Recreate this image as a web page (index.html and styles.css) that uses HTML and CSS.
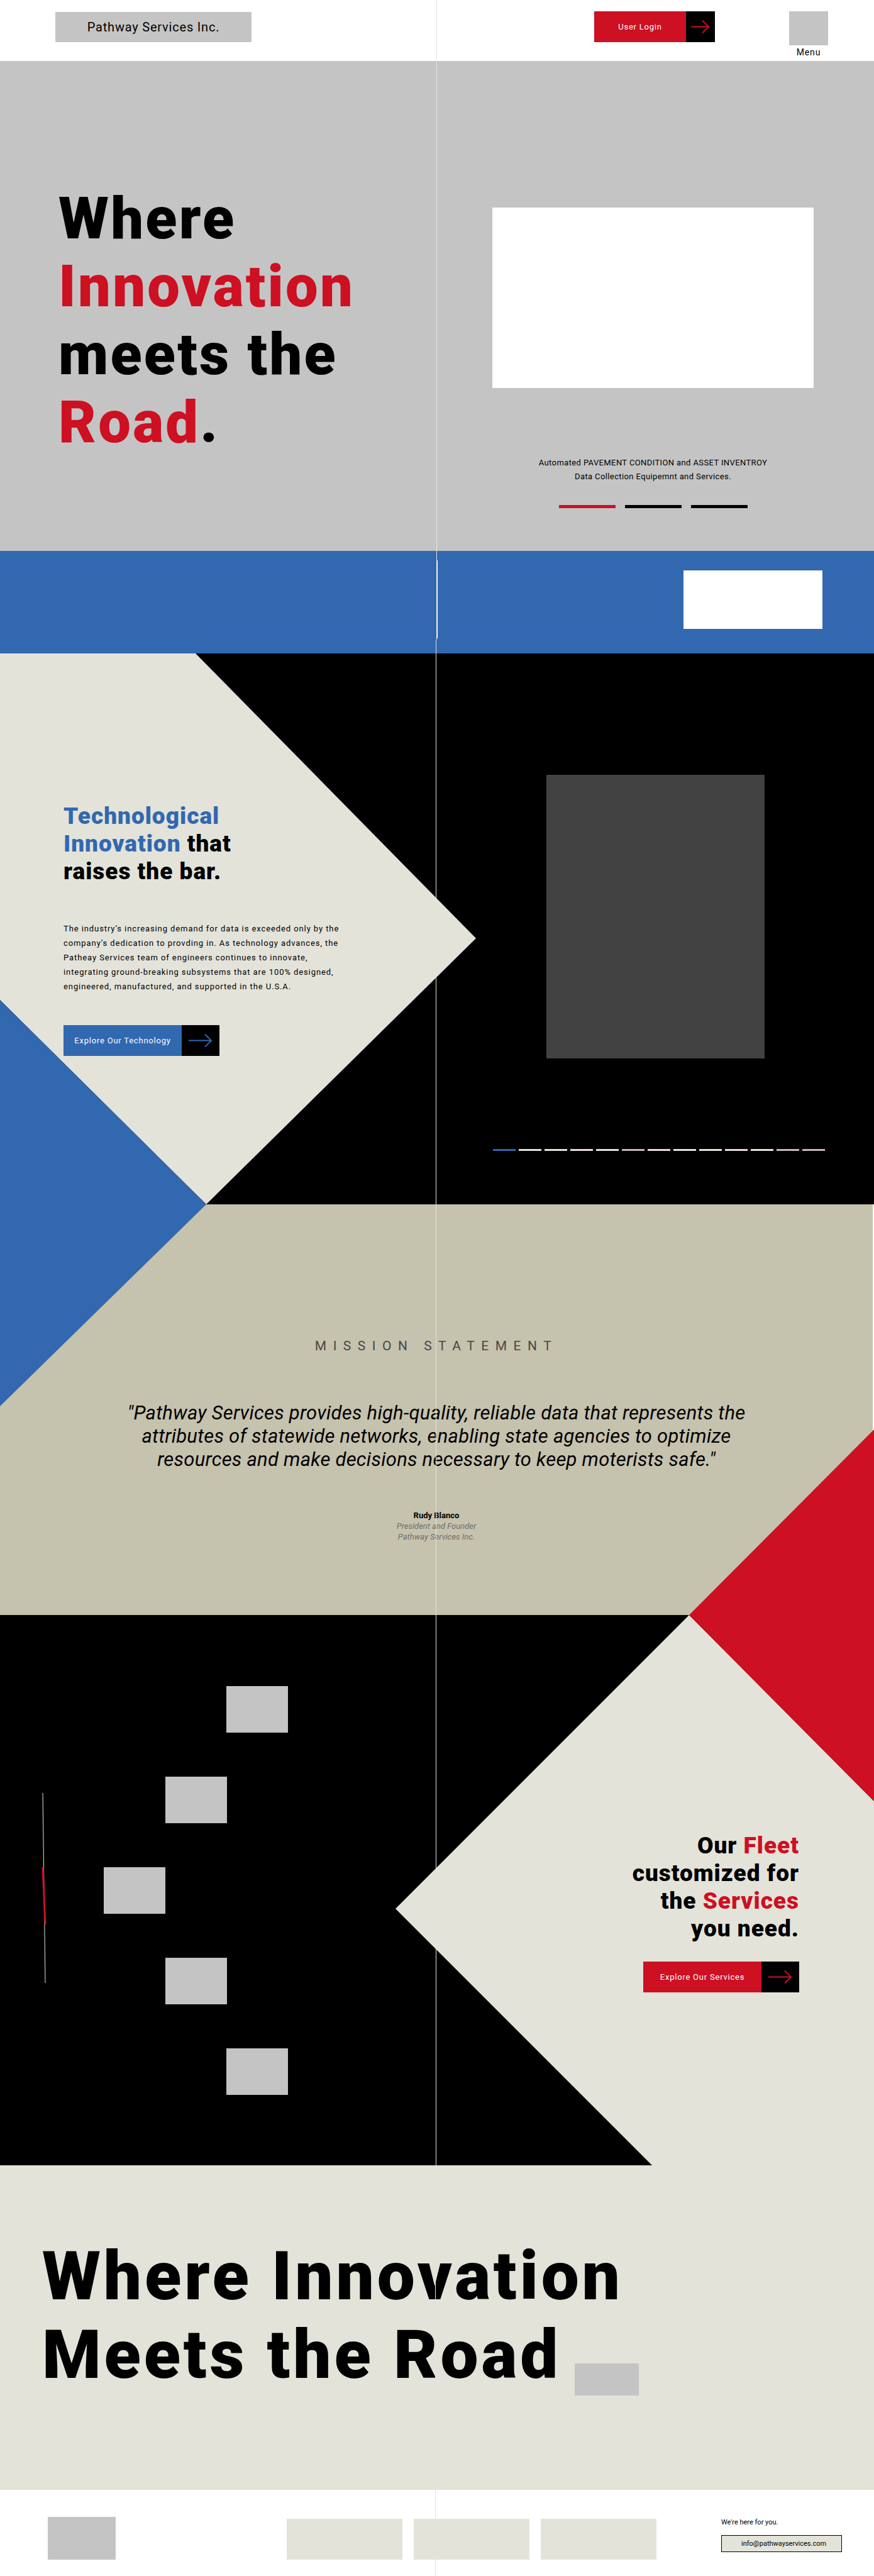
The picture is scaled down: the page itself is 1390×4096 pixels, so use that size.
FILE: index.html
```html
<!DOCTYPE html>
<html lang="en">
<head>
<meta charset="utf-8">
<meta name="viewport" content="width=device-width, initial-scale=1">
<title>Pathway Services Inc.</title>
<link rel="stylesheet" href="styles.css">
</head>
<body>
<div class="page">
  <header class="site-header">
    <a class="brand" href="#">Pathway Services Inc.</a>
    <button class="cta cta-small cta-red" type="button">
      <span class="cta-label">User Login</span>
      <span class="cta-arrow"><svg width="30" height="22" viewBox="0 0 30 22" aria-hidden="true"><path d="M0 10.5H28M18 .5L28 10.5L18 20.5"/></svg></span>
    </button>
    <button class="menu" type="button"><span class="menu-icon"></span>Menu</button>
  </header>

  <main>
    <section class="hero">
      <h1 class="hero-title">Where<br><em>Innovation</em><br>meets the<br><em>Road</em>.</h1>
      <div class="hero-side">
        <div class="hero-media"></div>
        <p class="hero-text">Automated PAVEMENT CONDITION and ASSET INVENTROY<br>Data Collection Equipemnt and Services.</p>
        <div class="hero-bars"><span class="is-active"></span><span></span><span></span></div>
      </div>
    </section>

    <section class="partners">
      <div class="partners-inner"><div class="partners-logo"></div></div>
    </section>

    <section class="tech">
      <svg class="shapes" viewBox="0 0 1390 876" preserveAspectRatio="none" aria-hidden="true">
        <polygon class="fill-cream" points="0,0 311,0 757,453 328,876 0,551"/>
        <polygon class="fill-blue" points="0,551 328,876 0,1197"/>
      </svg>
      <div class="tech-copy">
        <h2 class="section-title accent-blue"><em>Technological<br>Innovation</em> that<br>raises the bar.</h2>
        <p class="tech-text">The industry’s increasing demand for data is exceeded only by the<br>company’s dedication to provding in. As technology advances, the<br>Patheay Services team of engineers continues to innovate,<br>integrating ground-breaking subsystems that are 100% designed,<br>engineered, manufactured, and supported in the U.S.A.</p>
        <button class="cta cta-blue" type="button">
          <span class="cta-label">Explore Our Technology</span>
          <span class="cta-arrow"><svg width="38" height="22" viewBox="0 0 38 22" aria-hidden="true"><path d="M0 10.5H36M26 .5L36 10.5L26 20.5"/></svg></span>
        </button>
      </div>
      <div class="tech-side">
        <div class="tech-media"></div>
        <div class="tech-bars">
          <span class="is-active"></span><span></span><span></span><span class="is-pink"></span><span></span><span class="is-rose"></span><span class="is-pink"></span><span></span><span></span><span class="is-pink"></span><span></span><span class="is-rose"></span><span class="is-rose"></span>
        </div>
      </div>
    </section>

    <section class="mission">
      <h2 class="mission-title">MISSION STATEMENT</h2>
      <blockquote class="mission-quote">"Pathway Services provides high-quality, reliable data that represents the<br>attributes of statewide networks, enabling state agencies to optimize<br>resources and make decisions necessary to keep moterists safe."</blockquote>
      <p class="mission-author"><strong>Rudy Blanco</strong><br>President and Founder<br>Pathway Services Inc.</p>
    </section>

    <section class="fleet">
      <svg class="shapes" viewBox="0 0 1390 875" preserveAspectRatio="none" aria-hidden="true">
        <polygon class="fill-cream" points="1096,0 629,467 1037,875 1390,875 1390,296"/>
        <polygon class="fill-red" points="1096,0 1390,-295 1390,296"/>
      </svg>
      <div class="fleet-side">
        <svg class="fleet-track" width="12" height="302" viewBox="0 0 12 302" aria-hidden="true">
          <line class="track" x1="4" y1="0" x2="8" y2="302"/>
          <line class="thumb" x1="4" y1="118" x2="8" y2="209"/>
        </svg>
        <div class="fleet-tiles">
          <div class="tile step-2"></div>
          <div class="tile step-1"></div>
          <div class="tile"></div>
          <div class="tile step-1"></div>
          <div class="tile step-2"></div>
        </div>
      </div>
      <div class="fleet-copy">
        <h2 class="section-title accent-red">Our <em>Fleet</em><br>customized for<br>the <em>Services</em><br>you need.</h2>
        <button class="cta cta-red" type="button">
          <span class="cta-label">Explore Our Services</span>
          <span class="cta-arrow"><svg width="38" height="22" viewBox="0 0 38 22" aria-hidden="true"><path d="M0 10.5H36M26 .5L36 10.5L26 20.5"/></svg></span>
        </button>
      </div>
    </section>

    <section class="closing">
      <h2 class="closing-title">Where Innovation<br>Meets the Road<span class="closing-mark"></span></h2>
    </section>
  </main>

  <footer class="site-footer">
    <div class="footer-logo"></div>
    <div class="footer-tiles"><div></div><div></div><div></div></div>
    <div class="contact">
      <p class="contact-text">We're here for you.</p>
      <a class="contact-mail" href="mailto:info@pathwayservices.com">info@pathwayservices.com</a>
    </div>
  </footer>

  <svg class="center-line" aria-hidden="true"><line x1="49.96%" y1="0" x2="49.84%" y2="100%"/></svg>
</div>
</body>
</html>
```
FILE: styles.css
```css
:root {
  --red: #cd1022;
  --blue: #3168b0;
  --cream: #e3e3da;
  --tan: #c5c2ae;
  --grey: #c4c4c4;
}

* { box-sizing: border-box; }

body {
  margin: 0;
  background: #fff;
  color: #000;
  font-family: Roboto, "Liberation Sans", sans-serif;
  font-size: 13px;
}

h1, h2, p, blockquote { margin: 0; }

.page { position: relative; overflow: hidden; }

.center-line {
  position: absolute;
  inset: 0;
  width: 100%;
  height: 100%;
  pointer-events: none;
}
.center-line line {
  stroke: var(--cream);
  stroke-width: 1;
  shape-rendering: crispEdges;
}

/* Header */
.site-header {
  display: flex;
  align-items: flex-start;
  padding: 18px 73px 6px 88px;
}
.brand {
  width: 312px;
  margin-top: 1px;
  background: var(--grey);
  color: #000;
  font-size: 20px;
  line-height: 48px;
  letter-spacing: 0.04em;
  text-align: center;
  text-decoration: none;
}
.menu {
  display: flex;
  flex-direction: column;
  align-items: center;
  gap: 3px;
  margin-left: 118px;
  padding: 0;
  border: 0;
  background: none;
  color: #000;
  font: 14px/16px Roboto, "Liberation Sans", sans-serif;
  letter-spacing: 0.06em;
}
.menu-icon { width: 62px; height: 54px; background: var(--grey); }

/* Two-part button: label and arrow */
.cta {
  display: inline-flex;
  width: 248px;
  height: 49px;
  padding: 0;
  border: 0;
  background: #000;
  color: #fff;
  font: 13px/49px Roboto, "Liberation Sans", sans-serif;
  letter-spacing: 0.06em;
}
.cta-label { flex: 1; }
.cta-arrow {
  display: flex;
  align-items: center;
  justify-content: center;
  width: 60px;
  height: 49px;
}
.cta-arrow path { fill: none; stroke-width: 2; }
.cta-red .cta-label { background: var(--red); }
.cta-red path { stroke: var(--red); }
.cta-blue .cta-label { background: var(--blue); }
.cta-blue path { stroke: var(--blue); }
.cta-small { width: 192px; margin-left: auto; }
.cta-small .cta-arrow { width: 46px; }

/* Hero */
.hero {
  display: grid;
  grid-template-columns: 1fr 1fr;
  background: var(--grey);
}
.hero-title {
  padding: 197px 0 150px 93px;
  font-size: 92px;
  font-weight: 900;
  line-height: 108px;
  letter-spacing: 0.035em;
}
.hero-title em { color: var(--red); font-style: normal; }
.hero-side {
  display: flex;
  flex-direction: column;
  align-items: center;
  padding: 233px 96px 0 88px;
}
.hero-media { width: 100%; height: 287px; background: #fff; }
.hero-text {
  margin-top: 108px;
  line-height: 22px;
  letter-spacing: 0.03em;
  text-align: center;
  white-space: nowrap;
}
.hero-bars { display: flex; gap: 15px; margin-top: 34px; }
.hero-bars span { width: 90px; height: 5px; background: #000; }
.hero-bars .is-active { background: var(--red); }

/* Partners strip */
.partners { padding: 15px 82px 24px 50%; background: var(--blue); }
.partners-inner {
  display: flex;
  justify-content: flex-end;
  padding: 16px 0 15px;
  border-left: 1px solid #fff;
}
.partners-logo { width: 221px; height: 93px; background: #fff; }

/* Sections with diagonal shapes */
.tech, .fleet {
  position: relative;
  display: grid;
  grid-template-columns: 1fr 1fr;
  background: #000;
}
.shapes {
  position: absolute;
  inset: 0;
  width: 100%;
  height: 100%;
  overflow: visible;
  pointer-events: none;
}
.fill-cream { fill: var(--cream); }
.fill-blue { fill: var(--blue); }
.fill-red { fill: var(--red); }
.section-title {
  font-size: 37px;
  font-weight: 900;
  line-height: 44px;
  letter-spacing: 1px;
}
.section-title em { font-style: normal; }
.accent-blue em { color: var(--blue); }
.accent-red em { color: var(--red); }

/* Technology */
.tech-copy { position: relative; padding: 237px 0 236px 101px; }
.tech-text {
  margin: 57px 0 50px;
  line-height: 23px;
  letter-spacing: 0.07em;
  white-space: nowrap;
}
.tech-copy .cta { display: flex; }
.tech-side { position: relative; padding-top: 193px; }
.tech-media { width: 50%; height: 451px; margin: 0 auto; background: #424242; }
.tech-bars { display: flex; gap: 5px; margin: 144px 78px 0 89px; }
.tech-bars span { flex: 1; height: 3px; background: var(--cream); }
.tech-bars .is-active { background: var(--blue); }
.tech-bars .is-pink { background: #eddcdc; }
.tech-bars .is-rose { background: #cfb8b8; }

/* Mission statement */
.mission {
  padding: 212px 0 116px;
  border-right: 2px solid #fff;
  background: var(--tan);
  text-align: center;
}
.mission-title {
  color: #474747;
  font-size: 21px;
  font-weight: 400;
  line-height: 26px;
  letter-spacing: 0.5em;
}
.mission-quote {
  margin: 75px 0 62px;
  font-size: 31px;
  font-style: italic;
  line-height: 37px;
  letter-spacing: 0.008em;
}
.mission-author { color: #6e6e6b; font-style: italic; line-height: 17px; }
.mission-author strong { color: #000; font-style: normal; }

/* Fleet */
.fleet-side {
  position: relative;
  display: flex;
  align-items: flex-start;
  gap: 89px;
  padding: 113px 0 112px 64px;
}
.fleet-track { margin-top: 170px; overflow: visible; }
.fleet-track .track { stroke: var(--cream); stroke-width: 1; }
.fleet-track .thumb { stroke: var(--red); stroke-width: 3; }
.fleet-tiles { display: flex; flex-direction: column; gap: 70px; }
.tile { width: 98px; height: 74px; background: var(--grey); }
.step-1 { margin-left: 98px; }
.step-2 { margin-left: 195px; }
.fleet-copy {
  position: relative;
  padding: 345px 119px 0 0;
  text-align: right;
}
.fleet-copy .cta { margin-top: 30px; }

/* Closing banner */
.closing { padding: 114px 0 150px 67px; background: var(--cream); }
.closing-title {
  font-size: 107px;
  font-weight: 900;
  line-height: 125px;
  letter-spacing: 0.045em;
}
.closing-mark {
  display: inline-block;
  width: 102px;
  height: 51px;
  margin-left: 22px;
  background: var(--grey);
  vertical-align: -28px;
}

/* Footer */
.site-footer {
  display: flex;
  align-items: flex-start;
  padding: 43px 51px 26px 76px;
}
.footer-logo { width: 108px; height: 68px; background: var(--grey); }
.footer-tiles { display: flex; gap: 18px; margin: 3px 103px 0 auto; }
.footer-tiles div { width: 184px; height: 65px; background: var(--cream); }
.contact { width: 192px; margin-top: 2px; font-size: 11px; }
.contact-text { line-height: 14px; }
.contact-mail {
  display: block;
  margin-top: 13px;
  padding-left: 31px;
  border: 1px solid #000;
  background: var(--cream);
  color: #000;
  line-height: 25px;
  text-decoration: none;
}
```
